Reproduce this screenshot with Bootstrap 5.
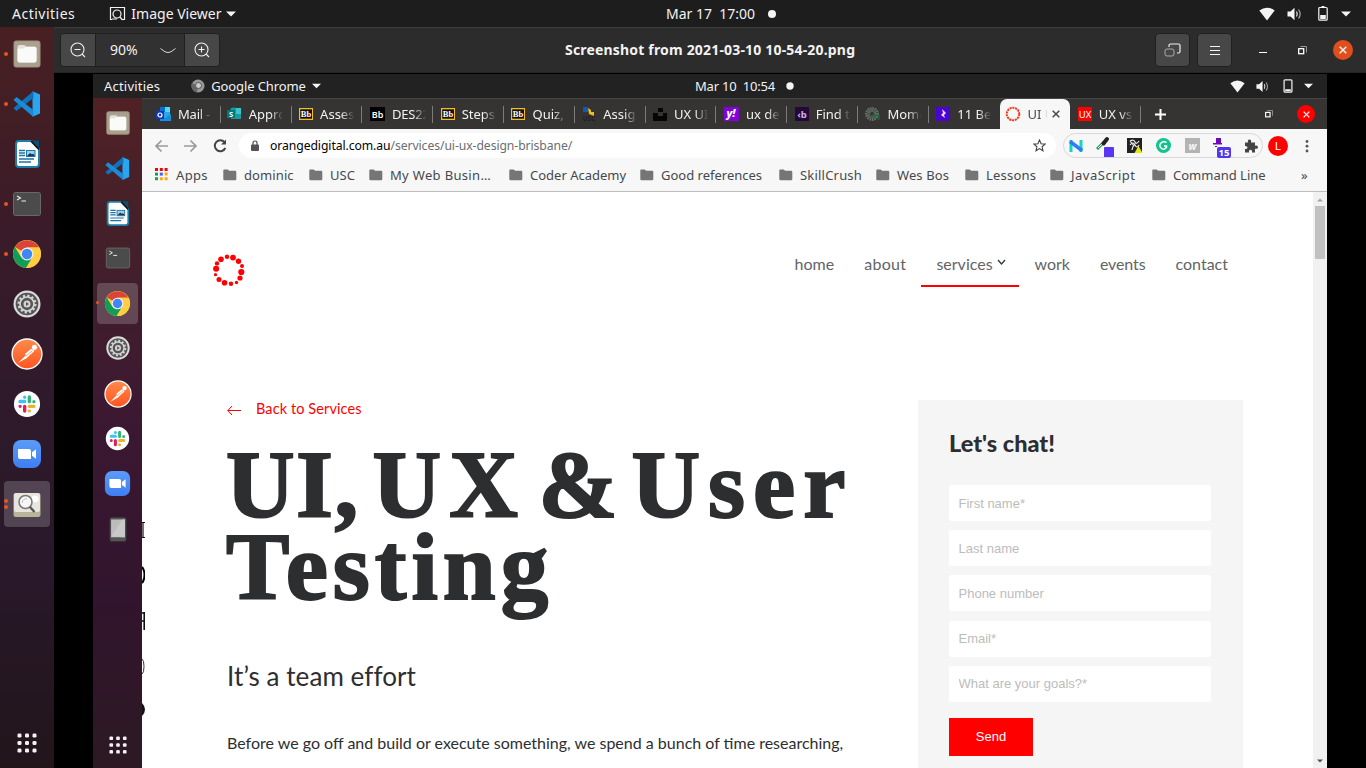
<!DOCTYPE html>
<html lang="en">
<head>
<meta charset="utf-8">
<title>Image Viewer</title>
<meta name="viewport" content="width=device-width, initial-scale=1">
<link href="https://cdn.jsdelivr.net/npm/bootstrap@5.3.0/dist/css/bootstrap.min.css" rel="stylesheet">
<style>
body{width:1366px;height:768px;overflow:hidden;background:#000;font-family:"Noto Sans","Open Sans",sans-serif;color:#f2f2f2;line-height:1}
svg{display:block;flex:none}
span,a,h1,h2,h3,p{white-space:nowrap}
.fill-rest{flex:1 1 0;min-height:0;min-width:0}
/* letter-spacing steps */
.k-0{letter-spacing:0}.k-m2{letter-spacing:-.2px}.k-m1{letter-spacing:-.1px}.k-1{letter-spacing:.1px}.k-2{letter-spacing:.2px}.k-3{letter-spacing:.33px}.k-5{letter-spacing:.5px}
.topbar{height:27px;background:#1d1d1d;font-size:14px}
.topbar .lead-side{width:666px;padding-left:12px}
.topbar .app{margin-left:34px;gap:5px}
.topbar .clockdot{margin-left:12px}
.topbar .tray{padding-right:15px}
.topbar .tray svg:nth-child(2){margin-left:12px}
.topbar .tray svg:nth-child(3){margin-left:15px}
.topbar .tray svg:nth-child(4){margin-left:13px}
.viewer-dock{width:54px;padding-top:2px;background:linear-gradient(#482022,#3a1b29 28%,#2e1a2b 50%,#281829 75%,#22151a)}
.dock-item{height:50px;position:relative;flex:none}
.dock-item.on::before{content:"";position:absolute;inset:2px 4px;background:#ffffff30;border-radius:4px}
.dock-item svg{position:relative}
.run::after{content:"";position:absolute;left:4px;top:calc(50% - 2px);width:4px;height:4px;border-radius:50%;background:#e95420}
.run.twice::after{top:calc(50% - 5px);box-shadow:0 6px #e95420}
.headbar{height:46px;background:#2c2c2c;border-top:1px solid #3d3d3d;border-bottom:1px solid #262626;padding-left:6px;padding-right:13px}
.hbtn{height:34px;width:35px;background:#474747;border:1px solid #202020;border-radius:4px}
.hbtn+.hbtn{margin-left:7px}
.zoomgrp{border:1px solid #202020;border-radius:4px;height:34px;width:160px;overflow:hidden}
.zoomgrp .zb{width:34px;background:#474747}
.zoomgrp .zv{width:90px;background:#313131;border-left:1px solid #202020;border-right:1px solid #202020;font-size:14px;padding:0 8px 0 14px}
.title{font-size:14px;font-weight:700;margin-left:345px;letter-spacing:.18px}
.min{margin-left:27px}.res{margin-left:30px}
.closer{width:20px;height:20px;border-radius:50%;background:#e04e1b;margin-left:26px}
.stage{padding:1px 39px 0}
.innerbar{height:24px;background:#222;font-size:13px}
.innerbar .lead-side{width:602px;padding-left:11px}
.innerbar .app{margin-left:31px;gap:6px}
.innerbar .clockdot{margin-left:10px}
.innerbar .tray{padding-right:14px}
.innerbar .tray svg:nth-child(2){margin-left:11px}
.innerbar .tray svg:nth-child(3){margin-left:13px}
.innerbar .tray svg:nth-child(4){margin-left:11px}
.inner-dock{width:49px;padding-top:2.4px;background:linear-gradient(#502125,#43202a 22%,#3b1832 50%,#31142d 75%,#2c1923)}
.inner-dock .dock-item{height:45.1px}
.inner-dock .run::after{left:3px;width:3px;height:3px}
.tabstrip{height:31px;background:#353432;border-top:1px solid #474645;padding-left:8px;font-size:13px}
.tb{width:70.8px;height:30px;padding-left:7.5px;position:relative;flex:none}
.tb:first-child,.tb:nth-child(2){padding-left:6px}
.tb::after{content:"";position:absolute;right:0;top:7px;height:17px;width:1px;background:#7d7c7a}
.tb .lbl{margin-left:7px;width:35px;overflow:hidden;-webkit-mask-image:linear-gradient(90deg,#000 60%,transparent 98%);line-height:20px}
.tb.cur{background:#f7f7f7;border-radius:7px 7px 0 0;color:#45494d;padding-left:5px}
.tb.cur .lbl{width:20px}
.tb.cur::after,.tb.nosep::after{display:none}
.plus{margin-left:14px}.ires{margin-left:99px}
.iclose{width:18px;height:18px;background:red;margin-left:24px}
.toolbar{height:33px;background:#f7f7f7;padding-left:12px;color:#444}
.fwd{margin-left:14px}.rel{margin-left:15px}
.omni{width:817px;height:25px;border-radius:13px;background:#fff;font-size:12.2px;margin-left:12px;padding-left:11px;padding-right:10px}
.url{margin-left:10px;letter-spacing:-.08px;line-height:18px;color:#6a6d71}
.exts{width:200px;height:25px;border:1px solid #d8d8da;border-radius:13px;margin-left:7px;padding-left:5px;padding-right:4px}
.dots{margin-left:16px}
.bm{height:30px;background:#f7f7f7;border-bottom:1px solid #bdbdbd;padding:0 0 4px 13px;font-size:13px;color:#45494d;display:grid;grid-template-columns:68px 86px 60px 140px 131px 139px 97px 89px 85px 102px 149px 20px;align-items:center}
.bm span{line-height:18px}
.bm div{gap:7px}
.sheet{background:#fff;font-family:Lato,sans-serif;color:#2d2e30}
.edge{width:3px;padding-top:330px;gap:28px}
.site{width:1168px}
.scrollbar{width:14px;background:#f1f1f1;padding:6px 2px 5px}
.thumb{width:10px;height:53px;background:#c1c1c1;margin-top:4px}
.sitenav{padding:0 70px 0 68px;height:95px}
.sitenav a{color:#626466;text-decoration:none;font-size:16px;padding:0 15px;height:44px;line-height:41px}
.sitenav a.here{border-bottom:2px solid red;width:98px}
.sitenav .logo{margin-bottom:1px}
.bodyrow{margin-top:113px}
.copy{width:773px;padding-left:82px}
.back{color:red;font-size:14.5px;height:18px;gap:15px;letter-spacing:.1px;text-decoration:none}
.hero{font:700 95px/82px "Liberation Serif",serif;-webkit-text-stroke:2px #2d2e30;margin:26px 0 0 -1px}
.hero .wd1{letter-spacing:1.5px;margin-right:-11px}
.hero .wd2{letter-spacing:8px;margin-right:-11px}
.hero .wd3{margin-right:-11px;letter-spacing:1px}
.hero .wd4{letter-spacing:8px}
.hero .wide{letter-spacing:5px}
.sub{font-size:26px;line-height:30px;font-weight:400;margin:53px 0 0;letter-spacing:.08px}
.para{font-size:16px;line-height:24px;margin:40px 0 0}
.chat{width:325px;background:#f5f5f5;padding:30px 32px 0 31px}
.chat h3{font-weight:900;font-size:23.500px;line-height:26px;margin:0 0 29px}
.chat .form-control{height:36px;border:0;border-radius:3px;font:13px "Liberation Sans",sans-serif;padding:0 9.5px;margin-bottom:9.2px}
.chat .form-control::placeholder{color:#bcbcbc}
.send{width:84px;height:38px;background:red;color:#fff;border:0;border-radius:0;font:13px "Liberation Sans",sans-serif;margin-top:16.2px;display:block}
</style>
</head>
<body class="d-flex flex-column">
<svg width="0" height="0" class="position-absolute">
<defs>
<linearGradient id="pm" x1="0" y1="0" x2="0" y2="1"><stop offset="0" stop-color="#ff8a4c"/><stop offset="1" stop-color="#ff5420"/></linearGradient>
<linearGradient id="zm" x1="0" y1="0" x2="0" y2="1"><stop offset="0" stop-color="#5a9cf8"/><stop offset="1" stop-color="#3f7df2"/></linearGradient>
<symbol id="files" viewBox="0 0 30 30"><rect x="1.5" y="1.5" width="27" height="27" rx="3" fill="#9d9280"/><rect x="2.5" y="2.5" width="25" height="25" rx="2.5" fill="#aaa08e"/><path d="M5.500 8q0-2 2-2h4.500q1.500 0 2 1.500h8.500q2 0 2 2v12q0 2-2 2h-15q-2 0-2-2z" fill="#e4e1db"/><path d="M5.500 10.500q0-1 1-1h5l2-1.500h9.500q1.500 0 1.500 1.500v12q0 2-2 2h-15q-2 0-2-2z" fill="#fafaf9"/></symbol>
<symbol id="code" viewBox="0 0 30 30"><path d="M20.500 2.200L28 5.500v19l-7.500 3.300z" fill="#2aa5f0"/><path d="M1.500 19l3 3L21.500 9V2z" fill="#1072b8"/><path d="M1.500 11l3-3L21.500 21v7z" fill="#1a8bd8"/></symbol>
<symbol id="doc" viewBox="0 0 30 30"><path d="M7 2h12l8 8v15q0 3-3 3H7q-3 0-3-3V5q0-3 3-3z" fill="#fff" stroke="#1d7fa8" stroke-width="2"/><path d="M18.500 1.500H27v8z" fill="#0e4f74"/><path d="M19 2l8 8.500" stroke="#111" stroke-width="1.500"/><path d="M7 11.500h6M7 14h6M7 16.500h6M7 20h15M7 23h12" stroke="#1c73a5" stroke-width="1.300"/><rect x="14.500" y="11.500" width="8.500" height="6" fill="#9bd0ee" stroke="#1c73a5"/><path d="M15 17l3-3 2 1.500 1-1 2 2.500z" fill="#234"/></symbol>
<symbol id="term" viewBox="0 0 30 30"><rect x="1.500" y="3.500" width="27" height="23" rx="2" fill="#4b4b4b" stroke="#686868"/><path d="M5 7l3.500 2L5 11M9.500 12h4.500" fill="none" stroke="#eee" stroke-width="1.100"/></symbol>
<symbol id="chrome" viewBox="0 0 30 30"><circle cx="15" cy="15" r="14" fill="#ffce43"/><path d="M15 15L2.900 8A14 14 0 0 1 27.100 8.500H15z" fill="#db4437"/><path d="M2.900 8A14 14 0 0 0 14 29l6-10-5 2-6-3z" fill="#0f9d58"/><path d="M27.100 8.500H15l5.500 10L14 29A14 14 0 0 0 27.100 8.500z" fill="#ffce43"/><circle cx="15" cy="15" r="6.500" fill="#f1f1f1"/><circle cx="15" cy="15" r="5.200" fill="#4285f4"/></symbol>
<symbol id="gear" viewBox="0 0 30 30"><circle cx="15" cy="15" r="13.500" fill="#dadada"/><circle cx="15" cy="15" r="11.300" fill="#555"/><circle cx="15" cy="15" r="8.300" fill="none" stroke="#d4d4d4" stroke-width="2.400" stroke-dasharray="2.200 2.146"/><circle cx="15" cy="15" r="7" fill="none" stroke="#d4d4d4" stroke-width="1.700"/><circle cx="15" cy="15" r="3.500" fill="#d4d4d4"/><path d="M14 13l3 2-3 2z" fill="#555"/></symbol>
<symbol id="postman" viewBox="0 0 30 30"><circle cx="15" cy="15" r="14" fill="url(#pm)" stroke="#fff" stroke-width="1.300"/><path d="M6.500 23.500L13 17l7.500-6.500 1.500 1.500-7.500 7z" fill="#fff"/><path d="M13 15l6-5 2.500 2.500-6 4.500z" fill="#fff"/><circle cx="22" cy="8.700" r="2.400" fill="#fff"/><path d="M14 17l6-5" stroke="#ff7a44" stroke-width=".7"/></symbol>
<symbol id="slack" viewBox="0 0 30 30"><circle cx="15" cy="15" r="14" fill="#fff"/><g stroke-width="3.600" stroke-linecap="round"><path d="M12.500 7.800v0M7.500 12.300h5" stroke="#36c5f0"/><path d="M17.500 7.500v5M22.400 12.500v0" stroke="#2eb67d"/><path d="M17.500 17.500h5M17.500 22.400v0" stroke="#ecb22e"/><path d="M12.500 17.500v5M7.600 17.500v0" stroke="#e01e5a"/></g></symbol>
<symbol id="zoomapp" viewBox="0 0 30 30"><rect x="1" y="1" width="28" height="28" rx="8" fill="url(#zm)"/><path d="M6 10h11q2 0 2 2v8H8q-2 0-2-2zM20 13.200l4-3v9.600l-4-3z" fill="#fff"/></symbol>
<symbol id="imgv" viewBox="0 0 30 30"><rect x="1.500" y="4" width="27" height="24" rx="2.500" fill="#b9b49c"/><rect x="2" y="4" width="26" height="19" rx="2" fill="#e7e5dc"/><circle cx="23" cy="10" r="3.500" fill="#fff"/><circle cx="13.500" cy="13" r="6.500" fill="#f6f6f6" stroke="#777" stroke-width="1.500"/><path d="M18 18l4.500 5" stroke="#555" stroke-width="2.400"/><path d="M10 14q1-5 5-4" stroke="#bbb" fill="none"/></symbol>
<symbol id="phone" viewBox="0 0 30 30"><rect x="5.500" y="1.500" width="19" height="28" rx="2.500" fill="#555" stroke="#333"/><rect x="7" y="4" width="16" height="20.500" fill="#bcbcbc"/><path d="M7 24L20 4h3v20.500z" fill="#c9c9c9"/></symbol>
<symbol id="grid9" viewBox="0 0 20 20"><g fill="#f4f1f2"><rect x=".5" y=".5" width="4" height="4" rx="1.300"/><rect x="8" y=".5" width="4" height="4" rx="1.300"/><rect x="15.500" y=".5" width="4" height="4" rx="1.300"/><rect x=".5" y="8" width="4" height="4" rx="1.300"/><rect x="8" y="8" width="4" height="4" rx="1.300"/><rect x="15.500" y="8" width="4" height="4" rx="1.300"/><rect x=".5" y="15.500" width="4" height="4" rx="1.300"/><rect x="8" y="15.500" width="4" height="4" rx="1.300"/><rect x="15.500" y="15.500" width="4" height="4" rx="1.300"/></g></symbol>
<symbol id="wifi" viewBox="0 0 16 14"><path d="M8 13.500L.3 3.500Q8-2.200 15.700 3.500z" fill="#f4f4f4"/></symbol>
<symbol id="vol" viewBox="0 0 16 14"><path d="M.5 4.500h3L7.500.8v12.400L3.500 9.500h-3z" fill="#f4f4f4"/><path d="M9.500 4.500q1.500 2.500 0 5" stroke="#eee" fill="none" stroke-width="1.200"/><path d="M11.500 2.500q3.300 4.500 0 9" stroke="#aaa" fill="none" stroke-width="1.200"/></symbol>
<symbol id="batt" viewBox="0 0 10 15"><path d="M3.500 0h3v1.500h-3z" fill="#f4f4f4"/><rect x=".8" y="1.500" width="8.400" height="12.700" rx="1" fill="none" stroke="#f4f4f4" stroke-width="1.200"/><rect x="2.200" y="9" width="5.600" height="4" fill="#f4f4f4"/></symbol>
<symbol id="batt2" viewBox="0 0 10 15"><rect x=".8" y="1" width="8.400" height="13" rx="1" fill="none" stroke="#f4f4f4" stroke-width="1.300"/><rect x="2" y="11" width="6" height="2" fill="#f4f4f4"/></symbol>
<symbol id="tri" viewBox="0 0 10 6"><path d="M0 .5h10L5 5.500z" fill="#f4f4f4"/></symbol>
<symbol id="restore" viewBox="0 0 9 9"><rect x=".7" y="2.700" width="5" height="5" fill="none" stroke="#fff" stroke-width="1.300"/><path d="M2.500.5H8.500V6.500" fill="none" stroke="#999"/></symbol>
<symbol id="x" viewBox="0 0 8 8"><path d="M.7.7l6.600 6.600M7.300.7L.7 7.300" stroke="currentColor" stroke-width="1.500"/></symbol>
<symbol id="folder" viewBox="0 0 14 12"><path d="M.3 1.300q0-.9.900-.9h3.500l1.500 1.400h6q1.100 0 1.100 1.100v7.200q0 1.200-1.100 1.200h-10.800q-1.100 0-1.100-1.200z" fill="#757575"/></symbol>
<symbol id="bb" viewBox="0 0 14 14"><rect x="0" y="1" width="14" height="12" fill="#f5bd1f"/><rect x="1.200" y="2.300" width="11.800" height="9.400" fill="#111"/><text x="7" y="10" font-family="Liberation Serif" font-weight="700" font-size="8.500" text-anchor="middle" fill="#fff">Bb</text></symbol>
<symbol id="od" viewBox="0 0 32 32"><g fill="red"><circle cx="8" cy="5.300" r="2.800"/><circle cx="14" cy="2.700" r="2.200"/><circle cx="20" cy="3.600" r="2.900"/><circle cx="25.500" cy="7.300" r="2.700"/><circle cx="29" cy="12" r="2"/><circle cx="28.300" cy="18" r="3.100"/><circle cx="27" cy="24" r="2.600"/><circle cx="23.500" cy="28.500" r="1.700"/><circle cx="18" cy="29.800" r="2.200"/><circle cx="11.500" cy="28.800" r="2.800"/><circle cx="6" cy="25.500" r="2.500"/><circle cx="2.500" cy="20.700" r="1.600"/><circle cx="3.100" cy="14.700" r="3"/><circle cx="4" cy="9.400" r="2.200"/></g></symbol>
</defs>
</svg>

<header class="topbar d-flex align-items-center">
  <div class="lead-side d-flex align-items-center">
    <span class="k-5">Activities</span>
    <div class="app d-flex align-items-center">
      <svg width="17" height="15" viewBox="0 0 17 15" fill="none" stroke="#f2f2f2" stroke-width="1.200"><path d="M3 13.500H1.500V1.500h14v12H13"/><circle cx="8" cy="8" r="4"/><path d="M11 11l2.500 3M3 13h5"/></svg>
      <span>Image Viewer</span>
      <svg width="10" height="6"><use href="#tri"/></svg>
    </div>
  </div>
  <span>Mar 17&nbsp; 17:00</span>
  <svg class="clockdot" width="10" height="10"><circle cx="5" cy="5" r="4" fill="#f4f4f4"/></svg>
  <div class="tray ms-auto d-flex align-items-center">
    <svg width="16" height="14"><use href="#wifi"/></svg>
    <svg width="16" height="14"><use href="#vol"/></svg>
    <svg width="10" height="15"><use href="#batt"/></svg>
    <svg width="10" height="6"><use href="#tri"/></svg>
  </div>
</header>

<div class="d-flex fill-rest">
  <nav class="viewer-dock d-flex flex-column flex-shrink-0">
    <div class="dock-item run d-flex align-items-center justify-content-center"><svg width="30" height="30"><use href="#files"/></svg></div>
    <div class="dock-item run d-flex align-items-center justify-content-center"><svg width="30" height="30"><use href="#code"/></svg></div>
    <div class="dock-item d-flex align-items-center justify-content-center"><svg width="30" height="30"><use href="#doc"/></svg></div>
    <div class="dock-item run d-flex align-items-center justify-content-center"><svg width="30" height="30"><use href="#term"/></svg></div>
    <div class="dock-item run d-flex align-items-center justify-content-center"><svg width="30" height="30"><use href="#chrome"/></svg></div>
    <div class="dock-item d-flex align-items-center justify-content-center"><svg width="30" height="30"><use href="#gear"/></svg></div>
    <div class="dock-item d-flex align-items-center justify-content-center"><svg width="32" height="32"><use href="#postman"/></svg></div>
    <div class="dock-item d-flex align-items-center justify-content-center"><svg width="28" height="28"><use href="#slack"/></svg></div>
    <div class="dock-item d-flex align-items-center justify-content-center"><svg width="30" height="30"><use href="#zoomapp"/></svg></div>
    <div class="dock-item on run twice d-flex align-items-center justify-content-center"><svg width="30" height="30"><use href="#imgv"/></svg></div>
    <div class="dock-item mt-auto d-flex align-items-center justify-content-center"><svg width="20" height="20"><use href="#grid9"/></svg></div>
  </nav>

  <main class="fill-rest d-flex flex-column">
    <div class="headbar d-flex align-items-center flex-shrink-0">
      <div class="zoomgrp d-flex">
        <div class="zb d-flex align-items-center justify-content-center"><svg width="16" height="16" viewBox="0 0 16 16" fill="none" stroke="#f0f0f0" stroke-width="1.100"><circle cx="7.500" cy="7.500" r="6.500"/><path d="M4.500 7.500h6M12 12l3 3"/></svg></div>
        <div class="zv d-flex align-items-center"><span>90%</span><svg class="ms-auto" width="16" height="7" viewBox="0 0 16 7" fill="none" stroke="#d8d8d8"><path d="M.5 1.500L5 4.800q3 1.500 6 0l4.500-3.300"/></svg></div>
        <div class="zb d-flex align-items-center justify-content-center"><svg width="16" height="16" viewBox="0 0 16 16" fill="none" stroke="#f0f0f0" stroke-width="1.100"><circle cx="7.500" cy="7.500" r="6.500"/><path d="M4.500 7.500h6M7.500 4.500v6M12 12l3 3"/></svg></div>
      </div>
      <span class="title">Screenshot from 2021-03-10 10-54-20.png</span>
      <div class="hbtn ms-auto d-flex align-items-center justify-content-center"><svg width="17" height="14" viewBox="0 0 17 14" fill="none"><path d="M5 4V2.500Q5 1 6.500 1h8Q16 1 16 2.500v6Q16 10 14.500 10H13" stroke="#f0f0f0" stroke-width="1.200"/><rect x="1" y="6" width="9" height="7" rx="2" stroke="#aaa"/></svg></div>
      <div class="hbtn d-flex align-items-center justify-content-center"><svg width="12" height="11" stroke="#f4f4f4"><path d="M1 1.500h10M1 5.500h10M1 9.500h10"/></svg></div>
      <svg width="9" height="9" class="min" stroke="#fff"><path d="M0 6.500h8"/></svg>
      <svg width="9" height="9" class="res"><use href="#restore"/></svg>
      <div class="closer d-flex align-items-center justify-content-center"><svg width="8" height="8"><use href="#x"/></svg></div>
    </div>

    <div class="stage fill-rest d-flex flex-column">
      <div class="innerbar d-flex align-items-center flex-shrink-0">
        <div class="lead-side d-flex align-items-center">
          <span class="k-2">Activities</span>
          <div class="app d-flex align-items-center">
            <svg width="14" height="14" viewBox="0 0 14 14"><circle cx="7" cy="7" r="6.500" fill="#999"/><path d="M7 7L1 4A7 7 0 0 0 6 13.500z" fill="#666"/><circle cx="7.500" cy="6.500" r="3" fill="#ccc" stroke="#555"/></svg>
            <span class="k-m1">Google Chrome</span>
            <svg width="9" height="6"><use href="#tri"/></svg>
          </div>
        </div>
        <span class="k-m2">Mar 10&nbsp; 10:54</span>
        <svg class="clockdot" width="10" height="10"><circle cx="5" cy="5" r="3.700" fill="#f4f4f4"/></svg>
        <div class="tray ms-auto d-flex align-items-center">
          <svg width="15" height="13"><use href="#wifi"/></svg>
          <svg width="14" height="13"><use href="#vol"/></svg>
          <svg width="10" height="14"><use href="#batt2"/></svg>
          <svg width="9" height="6"><use href="#tri"/></svg>
        </div>
      </div>

      <div class="d-flex fill-rest">
        <nav class="inner-dock d-flex flex-column flex-shrink-0">
          <div class="dock-item d-flex align-items-center justify-content-center"><svg width="26" height="26"><use href="#files"/></svg></div>
          <div class="dock-item d-flex align-items-center justify-content-center"><svg width="27" height="27"><use href="#code"/></svg></div>
          <div class="dock-item d-flex align-items-center justify-content-center"><svg width="27" height="27"><use href="#doc"/></svg></div>
          <div class="dock-item d-flex align-items-center justify-content-center"><svg width="26" height="26"><use href="#term"/></svg></div>
          <div class="dock-item on run d-flex align-items-center justify-content-center"><svg width="27" height="27"><use href="#chrome"/></svg></div>
          <div class="dock-item d-flex align-items-center justify-content-center"><svg width="26" height="26"><use href="#gear"/></svg></div>
          <div class="dock-item d-flex align-items-center justify-content-center"><svg width="28" height="28"><use href="#postman"/></svg></div>
          <div class="dock-item d-flex align-items-center justify-content-center"><svg width="25" height="25"><use href="#slack"/></svg></div>
          <div class="dock-item d-flex align-items-center justify-content-center"><svg width="27" height="27"><use href="#zoomapp"/></svg></div>
          <div class="dock-item d-flex align-items-center justify-content-center"><svg width="26" height="26"><use href="#phone"/></svg></div>
          <div class="dock-item mt-auto d-flex align-items-center justify-content-center"><svg width="18" height="18"><use href="#grid9"/></svg></div>
        </nav>

        <div class="fill-rest d-flex flex-column">
          <div class="tabstrip d-flex align-items-center flex-shrink-0">
            <div class="tb d-flex align-items-center"><svg width="15" height="14" viewBox="0 0 15 14"><rect x="4" width="10" height="13" fill="#28a8ea"/><path d="M4 0h5v5H4z" fill="#0a6fd0"/><path d="M9 0h5v5H9z" fill="#50d9ff"/><path d="M4 8l5 3 6-4v7H4z" fill="#1490df"/><rect y="4" width="8" height="8" fill="#1435b8"/><circle cx="4" cy="8" r="2" fill="none" stroke="#fff" stroke-width="1.200"/></svg><span class="lbl k-m2">Mail -</span></div>
            <div class="tb d-flex align-items-center"><svg width="15" height="14" viewBox="0 0 15 14"><circle cx="7" cy="4.500" r="4.500" fill="#036c70"/><rect x="4" y="1" width="10" height="11" fill="#1a9ba1"/><path d="M9 1h5v6H9z" fill="#37c6d0"/><rect y="3" width="8" height="8" fill="#03787c"/><text x="4" y="9.700" font-size="7.500" font-weight="700" fill="#fff" text-anchor="middle">S</text></svg><span class="lbl">Appro</span></div>
            <div class="tb d-flex align-items-center"><svg width="14" height="14"><use href="#bb"/></svg><span class="lbl">Asses</span></div>
            <div class="tb d-flex align-items-center"><svg width="15" height="14"><rect width="15" height="14" fill="#000"/><text x="7.500" y="10.500" font-size="9" font-weight="600" fill="#fff" text-anchor="middle">Bb</text></svg><span class="lbl k-m2">DES22</span></div>
            <div class="tb d-flex align-items-center"><svg width="14" height="14"><use href="#bb"/></svg><span class="lbl">Steps</span></div>
            <div class="tb d-flex align-items-center"><svg width="14" height="14"><use href="#bb"/></svg><span class="lbl">Quiz,</span></div>
            <div class="tb d-flex align-items-center"><svg width="14" height="14"><path d="M1 0h5v5H1z" fill="#0a5cb8"/><path d="M6 1l3 2v2h3v4L7 7z" fill="#f3bd19"/><text x="7" y="14" font-size="6.500" font-weight="700" fill="#222" text-anchor="middle">USC</text></svg><span class="lbl">Assig</span></div>
            <div class="tb d-flex align-items-center"><svg width="14" height="14" fill="#060606"><path d="M5 1h5v4H5zM0 6h5v3h5V6h4v8H0z"/></svg><span class="lbl">UX UI</span></div>
            <div class="tb d-flex align-items-center"><svg width="15" height="14"><rect width="15" height="14" fill="#8103d6"/><text x="7" y="10" font-size="11" font-weight="800" font-style="italic" fill="#fff" text-anchor="middle">y!</text></svg><span class="lbl">ux de</span></div>
            <div class="tb d-flex align-items-center"><svg width="14" height="14"><rect width="14" height="14" fill="#230839"/><text x="7" y="10.500" font-size="9.500" font-weight="700" fill="#c9b8ec" text-anchor="middle">‹b</text></svg><span class="lbl">Find t</span></div>
            <div class="tb d-flex align-items-center"><svg width="15" height="14"><circle cx="7" cy="7" r="4.500" fill="none" stroke="#666e69" stroke-width="5" stroke-dasharray="1.300 .6"/><path d="M7 11V8h3v3M10 8h4v5" fill="none" stroke="#1c6b40" stroke-width="1.200"/></svg><span class="lbl">Mome</span></div>
            <div class="tb d-flex align-items-center nosep"><svg width="14" height="14"><rect width="14" height="14" fill="#4a04cf"/><path d="M6 2l4 4-2 2 1 3-4-3 2-2z" fill="#e8dcff"/></svg><span class="lbl">11 Be</span></div>
            <div class="tb cur d-flex align-items-center"><svg width="16" height="16" viewBox="0 0 32 32"><circle cx="16" cy="16" r="12.500" fill="none" stroke="#f13a1c" stroke-width="4" stroke-dasharray="4.200 1.410"/></svg><span class="lbl">UI U</span><svg class="ms-1" width="8" height="8"><use href="#x"/></svg></div>
            <div class="tb d-flex align-items-center"><svg width="14" height="14"><rect width="14" height="14" fill="red"/><text x="7" y="11" font-size="9.500" fill="#fff" text-anchor="middle">UX</text></svg><span class="lbl">UX vs</span></div>
            <svg class="plus" width="11" height="11" stroke="#fff" stroke-width="2"><path d="M5.500 0v11M0 5.500h11"/></svg>
            <svg class="ires" width="8" height="8"><use href="#restore"/></svg>
            <div class="closer iclose d-flex align-items-center justify-content-center"><svg width="7" height="7"><use href="#x"/></svg></div>
          </div>

          <div class="toolbar d-flex align-items-center flex-shrink-0">
            <svg width="15" height="14" fill="none" stroke="#9a9a9a" stroke-width="1.700"><path d="M14 7H2M7.500 1.500L2 7l5.500 5.500"/></svg>
            <svg class="fwd" width="15" height="14" fill="none" stroke="#9a9a9a" stroke-width="1.700"><path d="M1 7h12M7.500 1.500L13 7l-5.500 5.500"/></svg>
            <svg class="rel" width="14" height="14" fill="none" stroke="#444" stroke-width="2"><path d="M11.500 3.200A5.500 5.500 0 1 0 12.300 9"/><path d="M8 5.500h5V.5z" fill="#444" stroke="none"/></svg>
            <div class="omni d-flex align-items-center">
              <svg width="10" height="12"><rect x="1" y="4.500" width="8" height="6.500" rx="1" fill="#505357"/><path d="M3 5V3q0-2 2-2t2 2v2" fill="none" stroke="#505357" stroke-width="1.200"/></svg>
              <span class="url"><span class="text-black">orangedigital.com.au</span>/services/ui-ux-design-brisbane/</span>
              <svg class="ms-auto" width="13" height="13" viewBox="0 0 13 13"><path d="M6.500 1l1.600 3.800 4 .3-3 2.700.9 4-3.500-2.200L3 11.800l.9-4-3-2.700 4-.3z" fill="none" stroke="#444" stroke-width="1.100"/></svg>
            </div>
            <div class="exts d-flex align-items-center justify-content-between">
              <svg width="14" height="14"><path d="M2 13V1M12 13V1" fill="none" stroke="#12d7c0" stroke-width="3"/><path d="M1 2.500l12 9" stroke="#2d7bf5" stroke-width="3.500"/></svg>
              <svg width="18" height="22"><path d="M1 14l7-7" stroke="#2b9a62" stroke-width="3"/><path d="M2 13l7-7" stroke="#dfe" stroke-width="1"/><path d="M7.500 8.500L11 4" stroke="#222" stroke-width="4" stroke-linecap="round"/><rect x="8" y="12" width="10" height="11" rx="1" fill="#5a35f5"/></svg>
              <svg width="16" height="15"><rect width="15" height="15" fill="#222"/><path d="M3 3q4-2 5 1t4-1M3 7q3-4 5 0t4 0M5 12q1-5 3-5M3 3l4 5" fill="none" stroke="#eee" stroke-width="1.200"/><path d="M11.500 8l4 7h-8z" fill="#e8e80c"/></svg>
              <svg width="15" height="15"><circle cx="7.500" cy="7.500" r="7.500" fill="#11c48f"/><path d="M10.500 4.500Q7.500 2.500 5 5T5 10t5.500-.5V8H8" fill="none" stroke="#fff" stroke-width="1.500"/></svg>
              <svg width="15" height="15"><rect width="15" height="15" fill="#b3b3b3"/><text x="7.500" y="11.500" font-size="10" font-weight="800" font-style="italic" fill="#f4f4f4" text-anchor="middle">w</text></svg>
              <svg width="18" height="24"><path d="M3 4h5v5H3zM0 9h9v1.500H0zM2 12h2v1H2z" fill="#6c0bb5"/><rect x="4" y="13" width="14" height="11" rx="2" fill="#4f35ee"/><text x="11" y="22" font-size="9.500" font-weight="700" fill="#fff" text-anchor="middle">15</text></svg>
              <svg width="14" height="14" viewBox="0 0 14 14"><path d="M1 3.500h3q-.7-3 1.500-3t1.500 3h4v3.200q3-.7 3 1.500t-3 1.500V13.500H8q.4-2.700-1.500-2.700T5 13.500H1V10q2.500.2 2.500-1.500T1 7z" fill="#444"/></svg>
            </div>
            <svg class="ms-1" width="22" height="22"><circle cx="11" cy="11" r="10" fill="red"/><text x="11" y="15" font-size="11" fill="#fff" text-anchor="middle" font-family="Roboto">L</text></svg>
            <svg class="dots" width="4" height="14" fill="#555"><circle cx="2" cy="2.500" r="1.400"/><circle cx="2" cy="7.200" r="1.400"/><circle cx="2" cy="12" r="1.400"/></svg>
          </div>

          <div class="bm flex-shrink-0">
            <div class="d-flex align-items-center"><svg width="14" height="13"><path d="M0 0h3v3H0zM4.800 0h3v3h-3zM9.600 0h3v3h-3z" fill="red"/><path d="M0 4.600h3v3H0z" fill="#12a05c"/><path d="M4.800 4.600h3v3h-3z" fill="#3f62f0"/><path d="M9.600 4.600h3v3h-3zM9.600 9.200h3v3h-3zM4.800 9.200h3v3h-3z" fill="#f7a912"/><path d="M0 9.200h3v3H0z" fill="#12a05c"/></svg><span class="k-3">Apps</span></div>
            <div class="d-flex align-items-center"><svg width="14" height="12"><use href="#folder"/></svg><span class="k-1">dominic</span></div>
            <div class="d-flex align-items-center"><svg width="14" height="12"><use href="#folder"/></svg><span>USC</span></div>
            <div class="d-flex align-items-center"><svg width="14" height="12"><use href="#folder"/></svg><span class="k-3">My Web Busin…</span></div>
            <div class="d-flex align-items-center"><svg width="14" height="12"><use href="#folder"/></svg><span>Coder Academy</span></div>
            <div class="d-flex align-items-center"><svg width="14" height="12"><use href="#folder"/></svg><span>Good references</span></div>
            <div class="d-flex align-items-center"><svg width="14" height="12"><use href="#folder"/></svg><span class="k-2">SkillCrush</span></div>
            <div class="d-flex align-items-center"><svg width="14" height="12"><use href="#folder"/></svg><span class="k-1">Wes Bos</span></div>
            <div class="d-flex align-items-center"><svg width="14" height="12"><use href="#folder"/></svg><span class="k-2">Lessons</span></div>
            <div class="d-flex align-items-center"><svg width="14" height="12"><use href="#folder"/></svg><span class="k-5">JavaScript</span></div>
            <div class="d-flex align-items-center"><svg width="14" height="12"><use href="#folder"/></svg><span>Command Line</span></div>
            <span>»</span>
          </div>

          <div class="sheet fill-rest d-flex">
            <div class="edge d-flex flex-column flex-shrink-0">
              <svg width="3" height="16"><path d="M0 .5h3M1 0v15M0 15.500h3" stroke="#111" stroke-width="1.200"/></svg>
              <svg width="3" height="18"><path d="M0 1q2.500 3 2.500 8T0 17" fill="none" stroke="#000" stroke-width="2"/></svg>
              <svg width="3" height="18"><path d="M0 1h3M0 9h3M2.200 0v18" stroke="#111" stroke-width="1.600"/></svg>
              <svg width="3" height="17"><path d="M0 1q2 1 2 7.500T0 16" fill="none" stroke="#333"/></svg>
              <svg width="3" height="13"><path d="M0 0q3 3 3 6.500T0 13z" fill="#111"/></svg>
            </div>
            <div class="site d-flex flex-column flex-shrink-0">
              <div class="sitenav d-flex align-items-end flex-shrink-0">
                <svg class="logo me-auto" width="32" height="32"><use href="#od"/></svg>
                <a class="k-0">home</a><a class="k-3">about</a><a class="here d-flex">services<svg class="ms-1 mt-3" width="9" height="7"><path d="M1 1l3.500 4L8 1" fill="none" stroke="#333" stroke-width="1.300"/></svg></a><a class="k-0">work</a><a class="k-m1">events</a><a class="k-0">contact</a>
              </div>
              <div class="bodyrow d-flex fill-rest">
                <div class="copy">
                  <a class="back d-flex align-items-center"><svg width="14" height="11"><path d="M14 6.500H1M5 2L.8 6.500 5 11" fill="none" stroke="red"/></svg>Back to Services</a>
                  <h1 class="hero"><span class="wd1">UI,</span> <span class="wd2">UX</span> <span class="wd3">&amp;</span> <span class="wd4">User</span><br><span class="wide">Testing</span></h1>
                  <h2 class="sub">It’s a team effort</h2>
                  <p class="para">Before we go off and build or execute something, we spend a bunch of time researching,</p>
                </div>
                <form class="chat">
                  <h3>Let's chat!</h3>
                  <input class="form-control" placeholder="First name*">
                  <input class="form-control" placeholder="Last name">
                  <input class="form-control" placeholder="Phone number">
                  <input class="form-control" placeholder="Email*">
                  <input class="form-control" placeholder="What are your goals?*">
                  <button type="button" class="send">Send</button>
                </form>
              </div>
            </div>
            <div class="scrollbar d-flex flex-column align-items-center flex-shrink-0">
              <svg width="6" height="4"><path d="M0 3.500h6L3 .5z" fill="#a3a3a3"/></svg>
              <div class="thumb"></div>
              <svg class="mt-auto" width="6" height="4"><path d="M0 .5h6L3 3.500z" fill="#505050"/></svg>
            </div>
          </div>
        </div>
      </div>
    </div>
  </main>
</div>
</body>
</html>
